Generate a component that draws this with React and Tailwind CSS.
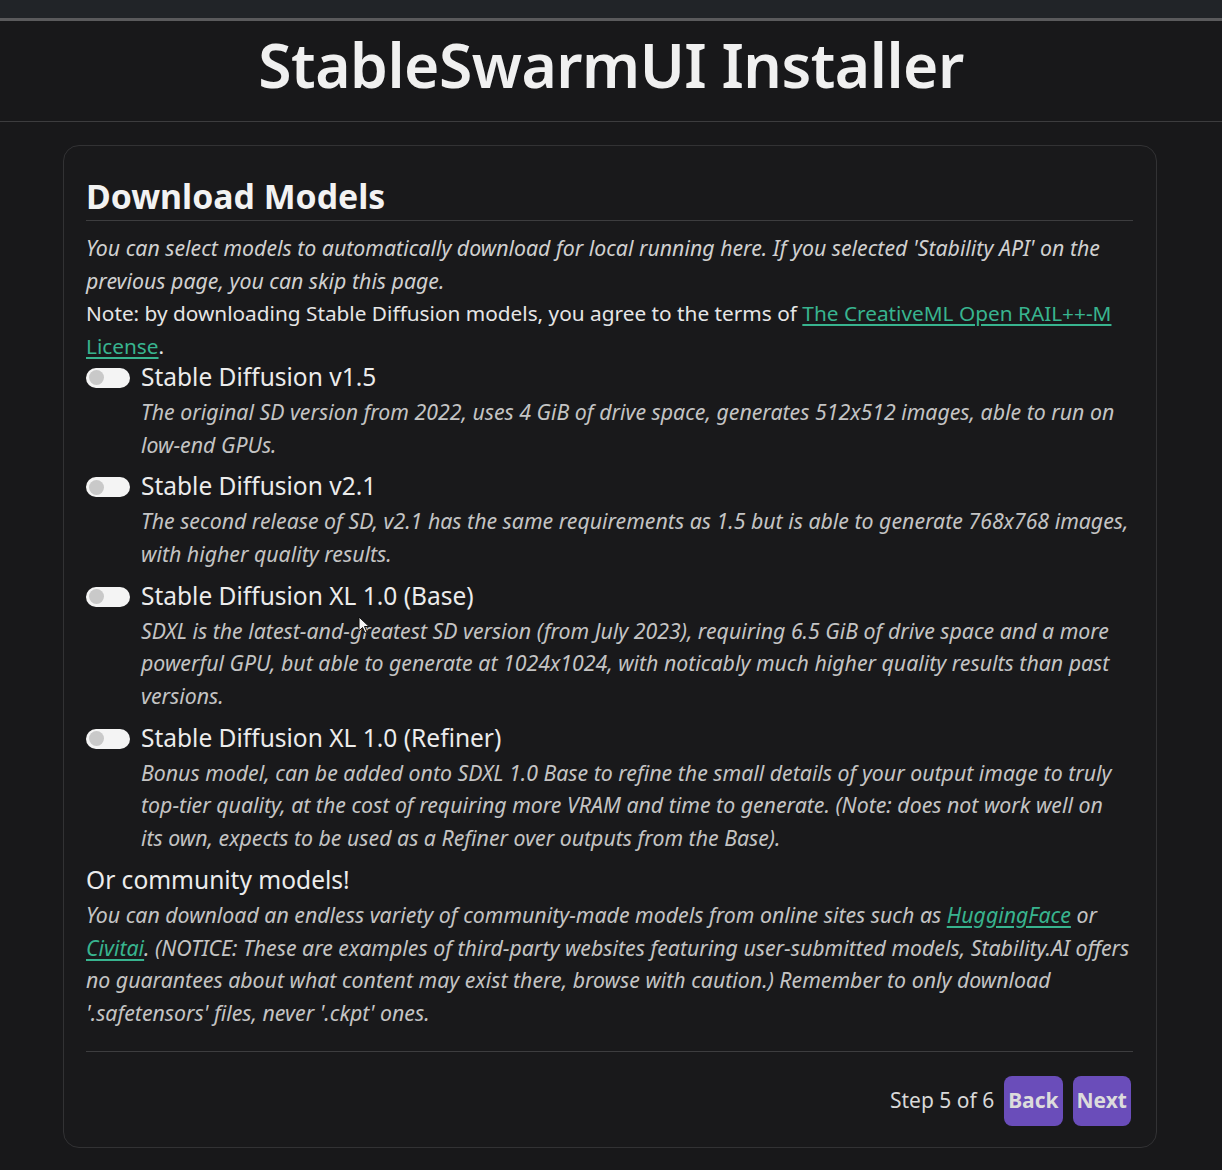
import React from "react";

const FONT = { fontFamily: "'Noto Sans', 'Open Sans', sans-serif" };

function Toggle() {
  return (
    <div className="mt-[7px] flex h-[20px] w-[44px] shrink-0 items-center rounded-full bg-[#f4f4f4] pl-[3px]">
      <div className="h-[15px] w-[15px] rounded-full bg-[#c9c9c9]" />
    </div>
  );
}

function Model({ title, narrow, children }) {
  return (
    <div className="flex flex-col">
      <div className="flex items-start gap-[11px]">
        <Toggle />
        <div className="text-[24.5px] leading-[32px] text-[#ececec]">{title}</div>
      </div>
      <div className={narrow ? "pl-[55px] pr-[10px] pt-[3px] text-[21.3px] italic leading-[32.7px] text-[#c4c4c4]" : "pl-[55px] pt-[3px] text-[21.3px] italic leading-[32.7px] text-[#c4c4c4]"}>
        {children}
      </div>
    </div>
  );
}

function Cursor() {
  return (
    <svg className="absolute left-[358px] top-[616px]" width="12" height="19" viewBox="0 0 12 19">
      <path d="M1 1 L1 15 L4.5 11.5 L7 17 L9 16 L6.5 10.5 L11 10.5 Z" fill="#f5f5f5" stroke="#111" strokeWidth="1" />
    </svg>
  );
}

export default function App() {
  return (
    <div className="relative min-h-[1170px] w-full bg-[#18181a]" style={FONT}>
      <div className="h-[18px] bg-[#212428]" />
      <div className="h-[3px] bg-[#5a5a5c]" />
      <div className="flex h-[101px] items-center justify-center border-b border-[#3c3c3e] pb-[11px]">
        <h1 className="text-[60.5px] font-semibold leading-none tracking-[-0.5px] text-[#f0f0f0]">
          StableSwarmUI Installer
        </h1>
      </div>
      <div className="ml-[63px] mr-[65px] pt-[23px]">
        <div className="flex flex-col rounded-[16px] border border-[#323234] bg-[#19191b] pb-[21px] pl-[22px] pr-[23px] pt-[30px]">
          <h2 className="border-b border-[#3d3d3f] pb-[4px] text-[33.8px] font-bold leading-[40px] text-[#f2f2f2]">
            Download Models
          </h2>
          <div className="pt-[11px] text-[20.8px] leading-[32.7px] text-[#e6e6e6]">
            <div className="text-[21.3px] italic text-[#d0d0d0]">
              You can select models to automatically download for local running here. If you selected 'Stability API' on the previous page, you can skip this page.
            </div>
            <div>
              Note: by downloading Stable Diffusion models, you agree to the terms of{" "}
              <a className="text-[#38b48f] underline underline-offset-[3px]">The CreativeML Open RAIL++-M License</a>.
            </div>
          </div>
          <div className="-mt-[2px] flex flex-col gap-[9px]">
            <Model title="Stable Diffusion v1.5">
              The original SD version from 2022, uses 4 GiB of drive space, generates 512x512 images, able to run on low-end GPUs.
            </Model>
            <Model title="Stable Diffusion v2.1">
              The second release of SD, v2.1 has the same requirements as 1.5 but is able to generate 768x768 images, with higher quality results.
            </Model>
            <Model title="Stable Diffusion XL 1.0 (Base)">
              SDXL is the latest-and-greatest SD version (from July 2023), requiring 6.5 GiB of drive space and a more powerful GPU, but able to generate at 1024x1024, with noticably much higher quality results than past versions.
            </Model>
            <Model title="Stable Diffusion XL 1.0 (Refiner)" narrow>
              Bonus model, can be added onto SDXL 1.0 Base to refine the small details of your output image to truly top-tier quality, at the cost of requiring more VRAM and time to generate. (Note: does not work well on its own, expects to be used as a Refiner over outputs from the Base).
            </Model>
          </div>
          <div className="pt-[9px] text-[24.5px] leading-[32px] text-[#ececec]">Or community models!</div>
          <div className="border-b border-[#3d3d3f] pb-[21px] pt-[3px] text-[21.3px] italic leading-[32.7px] text-[#c4c4c4]">
            You can download an endless variety of community-made models from online sites such as{" "}
            <a className="text-[#38b48f] underline underline-offset-[3px]">HuggingFace</a> or{" "}
            <a className="text-[#38b48f] underline underline-offset-[3px]">Civitai</a>. (NOTICE: These are examples of third-party websites featuring user-submitted models, Stability.AI offers no guarantees about what content may exist there, browse with caution.) Remember to only download '.safetensors' files, never '.ckpt' ones.
          </div>
          <div className="flex items-center justify-end gap-[10px] pr-[2px] pt-[24px]">
            <span className="text-[21px] text-[#d8d8d8]">Step 5 of 6</span>
            <button className="h-[50px] rounded-[8px] bg-[#6a4dba] px-[4px] text-[21px] font-bold text-[#dcdcdc]">Back</button>
            <button className="h-[50px] rounded-[8px] bg-[#6a4dba] px-[4px] text-[21px] font-bold text-[#dcdcdc]">Next</button>
          </div>
        </div>
      </div>
      <Cursor />
    </div>
  );
}
